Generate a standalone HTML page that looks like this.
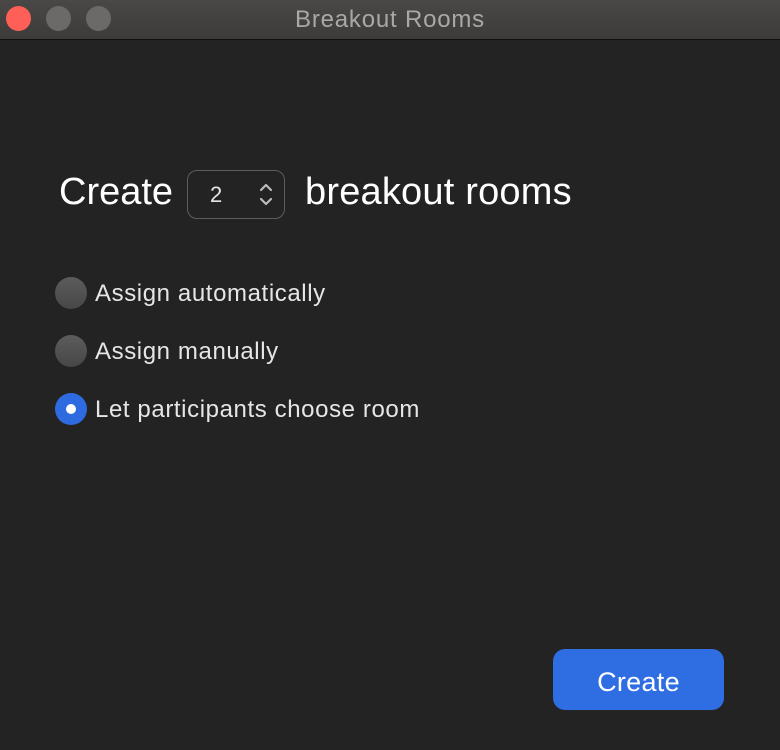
<!DOCTYPE html>
<html><head><style>
body{margin:0;width:780px;height:750px;background:#232323;font-family:"Liberation Sans",sans-serif;overflow:hidden;position:relative}
.tb{position:absolute;left:0;top:0;width:780px;height:39px;background:linear-gradient(#4a4846,#3d3b39);border-bottom:1px solid #111}
.dot{position:absolute;top:6px;width:25px;height:25px;border-radius:50%;background:#6b6a69}
.title{position:absolute;top:6px;left:0;width:780px;text-align:center;color:#a9a8a6;font-size:24px;letter-spacing:0.8px}
.t{position:absolute;color:#fff}
.r{position:absolute;left:55px;width:32px;height:32px;border-radius:50%;background:linear-gradient(#5c5c5c,#474747)}
.lbl{position:absolute;left:95px;color:#e6e6e6;font-size:24px;letter-spacing:0.6px}
</style></head><body>
<div class="tb">
<div class="dot" style="left:6px;background:#fe5f57"></div>
<div class="dot" style="left:46px"></div>
<div class="dot" style="left:86px"></div>
<div class="title">Breakout Rooms</div>
</div>
<div class="t" style="left:59px;top:171px;font-size:38px">Create</div>
<div style="position:absolute;left:187px;top:170px;width:96px;height:47px;border:1px solid #5d5d5d;border-radius:10px"></div>
<div class="t" style="left:210px;top:182px;font-size:22px;color:#e6e6e6">2</div>
<svg style="position:absolute;left:259px;top:182px" width="14" height="26" viewBox="0 0 14 26"><path d="M2 8L7 3L12 8M2 17L7 22L12 17" fill="none" stroke="#bbb" stroke-width="2.2" stroke-linecap="round" stroke-linejoin="round"/></svg>
<div class="t" style="left:305px;top:171px;font-size:38px;letter-spacing:0.2px">breakout rooms</div>
<div class="r" style="top:277px"></div><div class="lbl" style="top:280px">Assign automatically</div>
<div class="r" style="top:335px"></div><div class="lbl" style="top:338px">Assign manually</div>
<div class="r" style="top:393px;background:#2e6ae0"><div style="position:absolute;left:11px;top:11px;width:10px;height:10px;border-radius:50%;background:#fff"></div></div>
<div class="lbl" style="top:396px">Let participants choose room</div>
<div style="position:absolute;left:553px;top:649px;width:171px;height:61px;border-radius:12px;background:#2f6de3;color:#fff;font-size:27px;text-align:center;line-height:66px;letter-spacing:0.3px">Create</div>
</body></html>
